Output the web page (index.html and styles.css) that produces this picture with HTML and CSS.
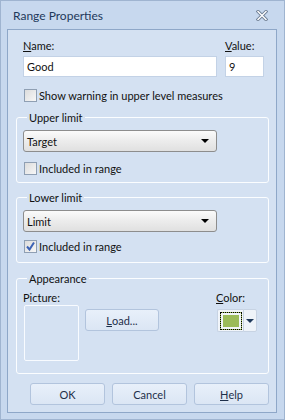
FILE: index.html
```html
<!DOCTYPE html>
<html lang="en">
<head>
  <meta charset="UTF-8">
  <title>Range Properties</title>
  <link rel="stylesheet" href="styles.css">
</head>
<body>
  <div class="window">
    <div class="titlebar">
      <span class="title">Range Properties</span>
      <svg class="close" width="12" height="11" viewBox="0 0 12 11">
        <path d="M2 1.5 L10 9.5 M10 1.5 L2 9.5" stroke="#6f7f95" stroke-width="3.2" stroke-linecap="square"/>
        <path d="M2 1.5 L10 9.5 M10 1.5 L2 9.5" stroke="#ffffff" stroke-width="1.4" stroke-linecap="square"/>
      </svg>
    </div>

    <div class="client">
      <div class="fields">
        <div class="field name">
          <label><u>N</u>ame:</label>
          <div class="textbox">Good</div>
        </div>
        <div class="field value">
          <label><u>V</u>alue:</label>
          <div class="textbox">9</div>
        </div>
      </div>

      <div class="check warn"><span class="box"></span>Show warning in upper level measures</div>

      <fieldset class="group upper">
        <legend>Upper limit</legend>
        <div class="combo"><span>Target</span><span class="arrow"></span></div>
        <div class="check"><span class="box"></span>Included in range</div>
      </fieldset>

      <fieldset class="group lower">
        <legend>Lower limit</legend>
        <div class="combo"><span>Limit</span><span class="arrow"></span></div>
        <div class="check"><span class="box checked">
          <svg width="11" height="11" viewBox="0 0 11 11"><path d="M2 5.5 L4.5 8.5 L9 1.5" fill="none" stroke="#3b62b5" stroke-width="2"/></svg>
        </span>Included in range</div>
      </fieldset>

      <fieldset class="group appearance">
        <legend>Appearance</legend>
        <div class="appear-row">
          <div class="picture">
            <label>Picture:</label>
            <div class="picture-box"></div>
          </div>
          <div class="btn load"><u>L</u>oad...</div>
          <div class="color">
            <label><u>C</u>olor:</label>
            <div class="color-btn">
              <span class="swatch-wrap"><span class="swatch"></span></span>
              <span class="color-drop"><span class="arrow dark"></span></span>
            </div>
          </div>
        </div>
      </fieldset>

      <div class="buttons">
        <div class="btn">OK</div>
        <div class="btn">Cancel</div>
        <div class="btn"><u>H</u>elp</div>
      </div>
    </div>
  </div>
</body>
</html>
```

FILE: styles.css
```css
* {
  box-sizing: border-box;
  margin: 0;
  padding: 0;
}

body {
  margin: 0;
  font-family: Lato, "Open Sans", sans-serif;
  font-size: 11px;
  color: #111;
  background: #c9daef;
}

.window {
  width: 285px;
  height: 420px;
  background: #c7d8ee;
  border: 1px solid #9fb4d0;
  padding: 0 7px 0 6px;
}

.titlebar {
  height: 28px;
  display: flex;
  align-items: center;
  justify-content: space-between;
  padding: 0 9px 0 6px;
}

.title {
  font-size: 12px;
  color: #1e395b;
}

.close {
  display: block;
}

.client {
  height: 384px;
  background: #d4e1f2;
  border: 1px solid #8ea7c8;
  padding: 8px 7px 0 8px;
}

.fields {
  display: flex;
  gap: 8px;
  padding-left: 7px;
}

.field label {
  display: block;
  height: 15px;
  line-height: 15px;
  margin-bottom: 3px;
}

.field.name {
  width: 194px;
}

.field.value {
  width: 39px;
}

.textbox {
  height: 21px;
  line-height: 19px;
  background: #fff;
  border: 1px solid #c3d2e6;
  padding-left: 3px;
}

.check {
  display: flex;
  align-items: center;
  height: 13px;
  margin-top: 10px;
  margin-left: 1px;
}

.check.warn {
  margin-top: 12px;
  margin-left: 8px;
}

.box {
  width: 13px;
  height: 13px;
  border: 1px solid #8f9fb3;
  background: linear-gradient(135deg, #dcdcdc, #f7f7f7);
  margin-right: 2px;
  display: flex;
  align-items: center;
  justify-content: center;
}

.group {
  border: 1px solid #fbfdff;
  border-radius: 3px;
  padding: 0 11px 7px 6px;
  margin-top: 8px;
  min-inline-size: 0;
}

.group legend {
  height: 15px;
  line-height: 15px;
  padding: 0 2px;
  margin-left: 4px;
}

.group.lower {
  margin-top: 7px;
  padding-bottom: 9px;
}

.group.lower .check {
  margin-top: 8px;
}

.group.appearance {
  margin-top: 8px;
  padding-bottom: 12px;
}

.combo {
  width: 194px;
  height: 22px;
  margin-top: 5px;
  border: 1px solid #8d8d8d;
  border-radius: 3px;
  background: linear-gradient(#fbfbfb, #ececec 50%, #e0e0e0);
  display: flex;
  align-items: center;
  justify-content: space-between;
  padding: 0 7px 0 3px;
}

.arrow {
  width: 0;
  height: 0;
  border-left: 4px solid transparent;
  border-right: 4px solid transparent;
  border-top: 4px solid #000;
}

.arrow.dark {
  border-top-color: #1e395b;
}

.appear-row {
  display: flex;
  margin-top: 4px;
}

.picture label,
.color label {
  display: block;
  height: 15px;
  line-height: 15px;
}

.picture-box {
  width: 55px;
  height: 56px;
  margin-left: 1px;
  border: 1px solid #f8fbff;
  border-radius: 2px;
}

.btn {
  height: 22px;
  border: 1px solid #b2c4dd;
  border-radius: 3px;
  background: linear-gradient(#e8f0fa, #dbe6f4);
  display: flex;
  align-items: center;
  justify-content: center;
  color: #1e2f4a;
}

.btn.load {
  width: 74px;
  margin-top: 19px;
  margin-left: 6px;
}

.color {
  margin-left: auto;
}

.color-btn {
  display: flex;
  margin-top: 4px;
  margin-left: 1px;
  height: 23px;
}

.swatch-wrap {
  width: 26px;
  height: 23px;
  border: 1px solid #c7d3e3;
  border-right: none;
  border-radius: 2px 0 0 2px;
  background: #f1f5fa;
  display: flex;
  align-items: center;
  justify-content: center;
}

.swatch {
  width: 22px;
  height: 18px;
  border: 1px dotted #000;
  display: flex;
  align-items: center;
  justify-content: center;
  background: #9bbb59;
  box-shadow: inset 0 0 0 2px #f1f5fa;
}

.color-drop {
  width: 14px;
  height: 23px;
  border: 1px solid #c7d3e3;
  border-radius: 0 2px 2px 0;
  background: #eef3f9;
  display: flex;
  align-items: center;
  justify-content: center;
}

.buttons {
  display: flex;
  justify-content: flex-end;
  gap: 7px;
  margin-top: 9px;
}

.buttons .btn {
  width: 75px;
}
```
